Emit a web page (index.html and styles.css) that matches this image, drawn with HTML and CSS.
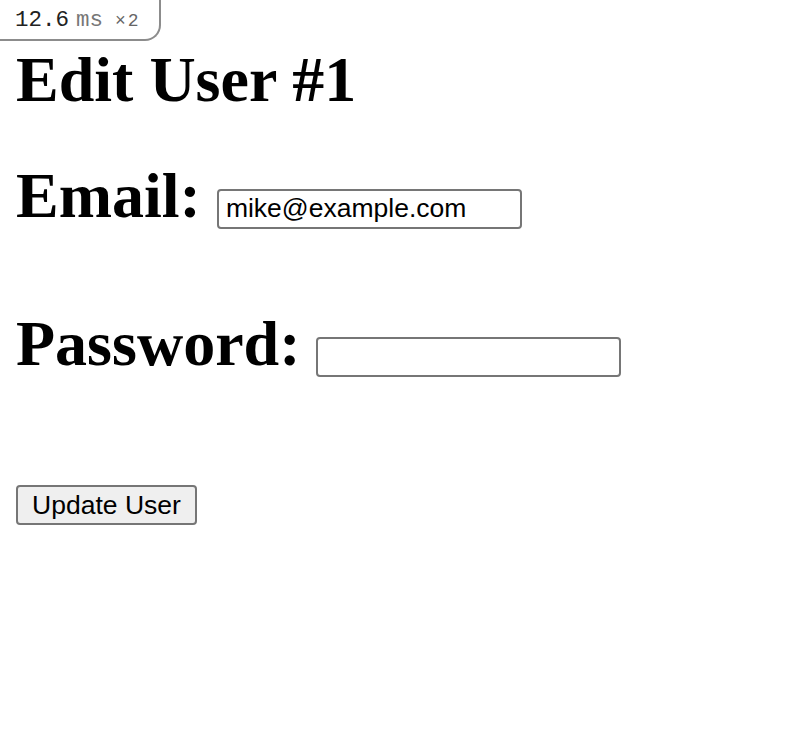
FILE: index.html
```html
<!DOCTYPE html>
<html>
<head>
<meta charset="utf-8">
<link rel="stylesheet" href="styles.css">
</head>
<body>
<div class="badge"><span class="num">12.6</span><span class="unit">ms</span><span class="mult">×2</span></div>
<main class="page">
  <h1 class="title">Edit User #1</h1>
  <form class="form">
    <div class="row first"><label class="label" for="email">Email:</label> <input class="input" id="email" type="text" value="mike@example.com"></div>
    <div class="row"><label class="label" for="password">Password:</label> <input class="input" id="password" type="password"></div>
    <div class="actions"><button class="button" type="button">Update User</button></div>
  </form>
</main>
</body>
</html>
```
FILE: styles.css
```css
html, body {
  margin: 0;
  padding: 0;
  background: #fff;
}
body {
  font-family: "Liberation Serif", "Times New Roman", serif;
  color: #000;
}
.badge {
  position: absolute;
  top: 0;
  left: 0;
  box-sizing: border-box;
  width: 161px;
  height: 41px;
  border-right: 2px solid #8c8c8c;
  border-bottom: 2px solid #8c8c8c;
  border-bottom-right-radius: 16px;
  background: #fff;
  display: flex;
  align-items: baseline;
  padding-left: 15px;
  line-height: 40px;
  font-family: "Liberation Mono", "DejaVu Sans Mono", monospace;
}
.badge .num {
  font-size: 22.5px;
  color: #222;
}
.badge .unit {
  font-size: 22.5px;
  color: #777;
  margin-left: 7px;
}
.badge .mult {
  font-size: 18px;
  color: #666;
  margin-left: 12px;
  letter-spacing: 2px;
}
.page {
  padding: 0 16px;
}
.title {
  margin: 43px 0 0;
  font-size: 64px;
  line-height: 74px;
  font-weight: bold;
}
.form {
  margin: 0;
}
.row {
  font-size: 64px;
  line-height: 74px;
  font-weight: bold;
  margin-top: 74px;
  white-space: nowrap;
}
.row.first {
  margin-top: 42px;
}
.label {
  font-weight: bold;
}
.input {
  box-sizing: border-box;
  width: 305px;
  height: 40px;
  margin: 0;
  padding: 2px 7px;
  border: 2px solid #767676;
  border-radius: 4px;
  font-family: "Liberation Sans", Arial, sans-serif;
  font-size: 26.5px;
  font-weight: normal;
  color: #000;
  background: #fff;
  vertical-align: baseline;
  outline: none;
}
.actions {
  margin-top: 104px;
  display: flex;
}
.button {
  box-sizing: border-box;
  width: 181px;
  height: 40px;
  margin: 0;
  padding: 2px 12px;
  border: 2px solid #767676;
  border-radius: 4px;
  background: #efefef;
  font-family: "Liberation Sans", Arial, sans-serif;
  font-size: 26.5px;
  color: #000;
}
```
